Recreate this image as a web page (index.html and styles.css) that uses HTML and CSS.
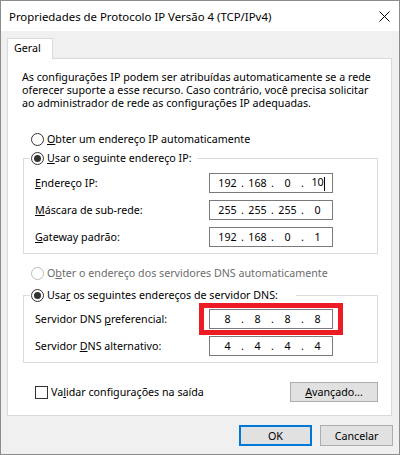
FILE: index.html
```html
<!DOCTYPE html>
<html lang="pt">
<head>
    <meta charset="UTF-8">
    <title>Propriedades de Protocolo IP Versão 4 (TCP/IPv4)</title>
    <link rel="stylesheet" href="styles.css">
</head>
<body>
<div class="window">
    <div class="titlebar">
        <span class="title">Propriedades de Protocolo IP Versão 4 (TCP/IPv4)</span>
        <svg class="close" width="11" height="11" viewBox="0 0 11 11"><path d="M0.5 0.5L10.5 10.5M10.5 0.5L0.5 10.5" stroke="#000" stroke-width="1"/></svg>
    </div>
    <div class="content">
        <div class="tab">Geral</div>
        <div class="panel">
            <p class="intro">As configurações IP podem ser atribuídas automaticamente se a rede<br>oferecer suporte a esse recurso. Caso contrário, você precisa solicitar<br>ao administrador de rede as configurações IP adequadas.</p>
            <div class="option opt-ip"><span class="radio"></span><span class="text"><u>O</u>bter um endereço IP automaticamente</span></div>
            <fieldset class="group group-ip">
                <legend class="leg-ip"><span class="radio on"></span><span class="text"><u>U</u>sar o seguinte endereço IP:</span></legend>
                <div class="row">
                    <span class="label"><u>E</u>ndereço IP:</span>
                    <div class="ipbox"><span class="seg">192</span><span class="dot">.</span><span class="seg">168</span><span class="dot">.</span><span class="seg">0</span><span class="dot">.</span><span class="seg">10<i class="caret"></i></span></div>
                </div>
                <div class="row">
                    <span class="label"><u>M</u>áscara de sub-rede:</span>
                    <div class="ipbox"><span class="seg">255</span><span class="dot">.</span><span class="seg">255</span><span class="dot">.</span><span class="seg">255</span><span class="dot">.</span><span class="seg">0</span></div>
                </div>
                <div class="row">
                    <span class="label"><u>G</u>ateway padrão:</span>
                    <div class="ipbox"><span class="seg">192</span><span class="dot">.</span><span class="seg">168</span><span class="dot">.</span><span class="seg">0</span><span class="dot">.</span><span class="seg">1</span></div>
                </div>
            </fieldset>
            <div class="option opt-dns disabled"><span class="radio"></span><span class="text">O<u>b</u>ter o endereço dos servidores DNS automaticamente</span></div>
            <fieldset class="group group-dns">
                <legend class="leg-dns"><span class="radio on"></span><span class="text">Usa<u>r</u> os seguintes endereços de servidor DNS:</span></legend>
                <div class="row">
                    <span class="label">Servidor DNS <u>p</u>referencial:</span>
                    <div class="ipbox marked"><span class="seg">8</span><span class="dot">.</span><span class="seg">8</span><span class="dot">.</span><span class="seg">8</span><span class="dot">.</span><span class="seg">8</span></div>
                </div>
                <div class="row">
                    <span class="label">Servidor <u>D</u>NS alternativo:</span>
                    <div class="ipbox"><span class="seg">4</span><span class="dot">.</span><span class="seg">4</span><span class="dot">.</span><span class="seg">4</span><span class="dot">.</span><span class="seg">4</span></div>
                </div>
            </fieldset>
            <div class="bottom">
                <div class="check"><span class="box"></span><span class="text">Va<u>l</u>idar configurações na saída</span></div>
                <div class="btn adv"><span><u>A</u>vançado...</span></div>
            </div>
        </div>
        <div class="buttons">
            <div class="btn ok">OK</div>
            <div class="btn">Cancelar</div>
        </div>
    </div>
</div>
</body>
</html>
```

FILE: styles.css
```css
*{
    margin:0;
    padding:0;
    box-sizing:border-box;
}
body{
    font-family:"Noto Sans","Liberation Sans",sans-serif;
    font-size:10.7px;
    color:#000;
    background:#fff;
}
u{
    text-decoration:underline;
    text-underline-offset:1px;
}
.text{
    white-space:nowrap;
}
.window{
    width:400px;
    height:455px;
    border:1px solid #8c8c8c;
    display:flex;
    flex-direction:column;
    background:#f0f0f0;
}
.titlebar{
    height:30px;
    background:#fff;
    display:flex;
    align-items:center;
    justify-content:space-between;
    padding:0 9px 0 8px;
}
.title{
    font-size:11.4px;
}
.close{
    display:block;
}
.content{
    flex:1;
    padding:7px 7px 0 6px;
}
/* tab */
.tab{
    width:46px;
    height:21px;
    margin-bottom:-1px;
    position:relative;
    background:#fff;
    border:1px solid #d9d9d9;
    border-bottom:none;
    padding-left:6px;
    line-height:19px;
}
.panel{
    height:358px;
    background:#fff;
    border:1px solid #d9d9d9;
}
.intro{
    margin:12px 0 0 14px;
    line-height:13px;
    white-space:nowrap;
}
/* radio */
.option{
    height:16px;
    display:flex;
    align-items:center;
    padding-left:23px;
}
.opt-ip{
    margin-top:21px;
}
.opt-dns{
    margin-top:11px;
}
.disabled{
    color:#6d6d6d;
}
.radio{
    width:13px;
    height:13px;
    border:1px solid #333;
    border-radius:50%;
    background:#fff;
    margin-right:3px;
    display:flex;
    align-items:center;
    justify-content:center;
    flex-shrink:0;
}
.disabled .radio{
    border-color:#bcbcbc;
}
.radio.on::after{
    content:"";
    width:7px;
    height:7px;
    border-radius:50%;
    background:#333;
}
/* group box */
.group{
    margin-left:15px;
    width:355px;
    border:1px solid #dcdcdc;
    padding:7px 0 6px 6px;
}
.group-ip{
    margin-top:3px;
}
.group-dns{
    margin-top:6px;
    padding-top:6px;
}
.group legend{
    height:16px;
    display:flex;
    align-items:center;
    padding-left:1px;
}
.leg-ip{
    padding-right:5px;
}
.leg-dns{
    padding-right:18px;
}
.row{
    height:20px;
    display:flex;
    align-items:center;
    margin-left:5px;
}
.row+.row{
    margin-top:7px;
}
.label{
    width:174px;
    white-space:nowrap;
}
.ipbox{
    width:124px;
    height:20px;
    border:1px solid #7a7a7a;
    display:flex;
    align-items:center;
    padding-left:5px;
    position:relative;
}
.seg{
    width:25px;
    text-align:center;
}
.dot{
    width:5px;
    text-align:center;
}
.caret{
    display:inline-block;
    width:1px;
    height:14px;
    margin-right:-1px;
    background:#000;
    vertical-align:middle;
}
.marked::after{
    content:"";
    position:absolute;
    left:-11px;
    right:-11px;
    top:-7px;
    bottom:-7px;
    border:5px solid #ed1c24;
}
/* bottom */
.bottom{
    margin:19px 0 0 27px;
    width:343px;
    height:20px;
    display:flex;
    align-items:center;
    justify-content:space-between;
}
.check{
    display:flex;
    align-items:center;
}
.box{
    width:13px;
    height:13px;
    border:1px solid #333;
    background:#fff;
    margin-right:3px;
}
.btn{
    width:73px;
    height:21px;
    background:#e1e1e1;
    border:1px solid #adadad;
    display:flex;
    align-items:center;
    justify-content:center;
}
.adv{
    width:88px;
    height:20px;
}
.ok{
    border:2px solid #0078d7;
}
.buttons{
    display:flex;
    justify-content:flex-end;
    gap:8px;
    margin:9px -1px 0 0;
}
```
